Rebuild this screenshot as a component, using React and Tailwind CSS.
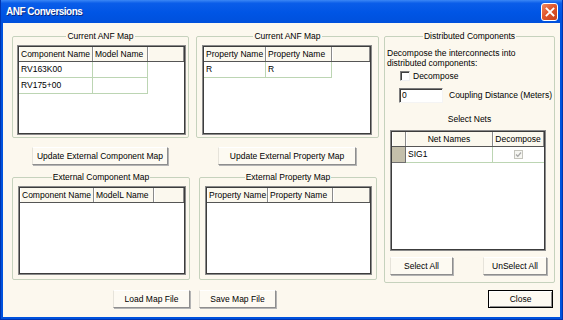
import React from "react";

function Group({ title, className = "", children }) {
  return (
    <fieldset className={`border border-[#c6d2bd] rounded-[2px] ${className}`}>
      <legend align="center" className="mx-auto px-[1px] leading-[12px] text-[8.5px] text-black">
        {title}
      </legend>
      {children}
    </fieldset>
  );
}

function HeadCell({ className = "", children, center = false }) {
  return (
    <div
      className={`h-full flex items-center ${center ? "justify-center" : "pl-[2px]"} border-r border-[#8a8a8a] shadow-[inset_1px_0_0_#ffffff] whitespace-nowrap overflow-hidden ${className}`}
    >
      {children}
    </div>
  );
}

function Cell({ className = "", children }) {
  return (
    <div className={`h-full flex items-center pl-[2px] border-r border-[#bcd5b3] whitespace-nowrap overflow-hidden ${className}`}>
      {children}
    </div>
  );
}

function GridFrame({ className = "", children }) {
  return (
    <div className={`border border-[#8a8a8a] ${className}`}>
      <div className="h-full border border-[#3c3c3c] bg-white flex flex-col overflow-hidden">{children}</div>
    </div>
  );
}

function Btn({ className = "", children }) {
  return (
    <button className={`h-[18px] bg-[#fdfaf2] border border-t-white border-l-[#e6e3da] border-r-[#8e8e8e] border-b-[#8e8e8e] shadow-[1px_1px_0_#b4b4b4] text-[8.5px] text-black flex items-center justify-center whitespace-nowrap ${className}`}>
      {children}
    </button>
  );
}

export default function App() {
  return (
    <div className="w-[563px] h-[320px] flex flex-col bg-[#0052dd] border-l border-r border-b border-[#0034b0] font-['Liberation_Sans',Arial,sans-serif] text-[8.5px] text-black overflow-hidden">
      {/* Title bar */}
      <div className="h-[23px] shrink-0 flex items-center justify-between pl-[5px] pr-[4px] bg-[linear-gradient(#3b87f5_0%,#0a5de9_14%,#0055e5_55%,#0050dc_100%)]">
        <span className="text-white font-bold text-[10px] tracking-[-0.5px] [text-shadow:1px_1px_0_#0a2a80]">
          ANF Conversions
        </span>
        <div className="w-[17px] h-[18px] rounded-[3px] border border-white bg-[linear-gradient(135deg,#f08a62_0%,#e0572c_45%,#c7401a_100%)] flex items-center justify-center">
          <svg width="10" height="10" viewBox="0 0 10 10">
            <path d="M1.5 1.5 L8.5 8.5 M8.5 1.5 L1.5 8.5" stroke="#ffffff" strokeWidth="1.8" strokeLinecap="square" />
          </svg>
        </div>
      </div>

      {/* Body */}
      <div className="flex-1 mx-[2px] mb-[2px] bg-[#fcf8ee] flex">
        {/* Left area */}
        <div className="w-[377px] flex flex-col pl-[9px] pt-[7px]">
          {/* Row 1 */}
          <div className="flex">
            <Group title="Current ANF Map" className="w-[177px] h-[108px]">
              <GridFrame className="ml-[4px] mt-[3px] w-[169px] h-[90px]">
                <div className="flex h-[15px] shrink-0 bg-[#fbf8ee] border-b border-[#555555]">
                  <HeadCell className="w-[74px]">Component Name</HeadCell>
                  <HeadCell className="w-[55px]">Model Name</HeadCell>
                  <HeadCell className="flex-1" />
                </div>
                <div className="flex h-[16px] shrink-0">
                  <Cell className="w-[74px] border-b">RV163K00</Cell>
                  <Cell className="w-[55px] border-b" />
                </div>
                <div className="flex h-[16px] shrink-0">
                  <Cell className="w-[74px] border-b">RV175+00</Cell>
                  <Cell className="w-[55px] border-b" />
                </div>
              </GridFrame>
            </Group>
            <Group title="Current ANF Map" className="ml-[7px] w-[183px] h-[108px]">
              <GridFrame className="ml-[5px] mt-[3px] w-[170px] h-[90px]">
                <div className="flex h-[15px] shrink-0 bg-[#fbf8ee] border-b border-[#555555]">
                  <HeadCell className="w-[62px]">Property Name</HeadCell>
                  <HeadCell className="w-[66px]">Property Name</HeadCell>
                  <HeadCell className="flex-1" />
                </div>
                <div className="flex h-[16px] shrink-0">
                  <Cell className="w-[62px] border-b">R</Cell>
                  <Cell className="w-[66px] border-b">R</Cell>
                </div>
              </GridFrame>
            </Group>
          </div>

          {/* Row 2 buttons */}
          <div className="flex mt-[9px]">
            <Btn className="ml-[20px] w-[136px]">Update External Component Map</Btn>
            <Btn className="ml-[50px] w-[138px]">Update External Property Map</Btn>
          </div>

          {/* Row 3 */}
          <div className="flex mt-[6px]">
            <Group title="External Component Map" className="w-[178px] h-[109px]">
              <GridFrame className="ml-[5px] mt-[3px] w-[168px] h-[89px]">
                <div className="flex h-[15px] shrink-0 bg-[#fbf8ee] border-b border-[#555555]">
                  <HeadCell className="w-[74px]">Component Name</HeadCell>
                  <HeadCell className="w-[60px]">ModelL Name</HeadCell>
                  <HeadCell className="flex-1" />
                </div>
              </GridFrame>
            </Group>
            <Group title="External Property Map" className="ml-[9px] w-[178px] h-[109px]">
              <GridFrame className="ml-[5px] mt-[3px] w-[167px] h-[89px]">
                <div className="flex h-[15px] shrink-0 bg-[#fbf8ee] border-b border-[#555555]">
                  <HeadCell className="w-[61px]">Property Name</HeadCell>
                  <HeadCell className="w-[65px]">Property Name</HeadCell>
                  <HeadCell className="flex-1" />
                </div>
              </GridFrame>
            </Group>
          </div>

          {/* Row 4 buttons */}
          <div className="flex mt-[10px]">
            <Btn className="ml-[101px] w-[77px]">Load Map File</Btn>
            <Btn className="ml-[9px] w-[77px]">Save Map File</Btn>
          </div>
        </div>

        {/* Right column */}
        <div className="w-[171px] ml-[4px] pt-[7px] flex flex-col">
          <Group title="Distributed Components" className="w-[171px] h-[253px]">
            <div className="pl-[2px] mt-[6px] leading-[10px]">
              <div>Decompose the interconnects into</div>
              <div>distributed components:</div>
            </div>
            <div className="flex items-center mt-[3px] ml-[15px] h-[10px]">
              <div className="w-[10px] h-[10px] bg-white border border-t-[#7c7c7c] border-l-[#7c7c7c] border-r-[#f0f0f0] border-b-[#f0f0f0] shadow-[inset_1px_1px_0_#3e3e3e]" />
              <span className="ml-[3px]">Decompose</span>
            </div>
            <div className="flex items-center mt-[7px] ml-[14px]">
              <div className="w-[44px] h-[15px] bg-white border border-t-[#7c7c7c] border-l-[#7c7c7c] border-r-[#f4f4f4] border-b-[#f4f4f4] shadow-[inset_1px_1px_0_#3e3e3e] flex items-center pl-[2px]">
                0
              </div>
              <span className="ml-[6px] whitespace-nowrap">Coupling Distance (Meters)</span>
            </div>
            <div className="mt-[11px] h-[10px] leading-[10px] text-center">Select Nets</div>
            <GridFrame className="ml-[5px] mt-[6px] w-[156px] h-[121px]">
              <div className="flex h-[15px] shrink-0 bg-[#fbf8ee] border-b border-[#555555]">
                <HeadCell className="w-[14px]" />
                <HeadCell className="w-[87px]" center>Net Names</HeadCell>
                <HeadCell className="flex-1" center>Decompose</HeadCell>
              </div>
              <div className="flex h-[16px] shrink-0">
                <div className="w-[14px] h-full bg-[#c4bfab] border-r border-b border-[#6f6f6f]" />
                <Cell className="w-[87px] border-b">SIG1</Cell>
                <div className="flex-1 h-full flex items-center justify-center border-b border-[#bcd5b3]">
                  <div className="w-[9px] h-[9px] border border-[#c4c4bc] bg-[#f6f6f2] flex items-center justify-center">
                    <svg width="7" height="7" viewBox="0 0 7 7">
                      <path d="M1 3.5 L2.8 5.3 L6 1.5" stroke="#a8a8a8" strokeWidth="1.3" fill="none" />
                    </svg>
                  </div>
                </div>
              </div>
            </GridFrame>
            <div className="flex mt-[6px]">
              <Btn className="ml-[5px] w-[63px]">Select All</Btn>
              <Btn className="ml-[30px] w-[64px]">UnSelect All</Btn>
            </div>
          </Group>
          <div className="flex justify-end mt-[7px] mr-[2px]">
            <button className="w-[65px] h-[18px] bg-[#fdfaf2] border border-black shadow-[inset_1px_1px_0_#ffffff,inset_-1px_-1px_0_#8e8e8e] text-[8.5px] flex items-center justify-center">
              Close
            </button>
          </div>
        </div>
      </div>
    </div>
  );
}
